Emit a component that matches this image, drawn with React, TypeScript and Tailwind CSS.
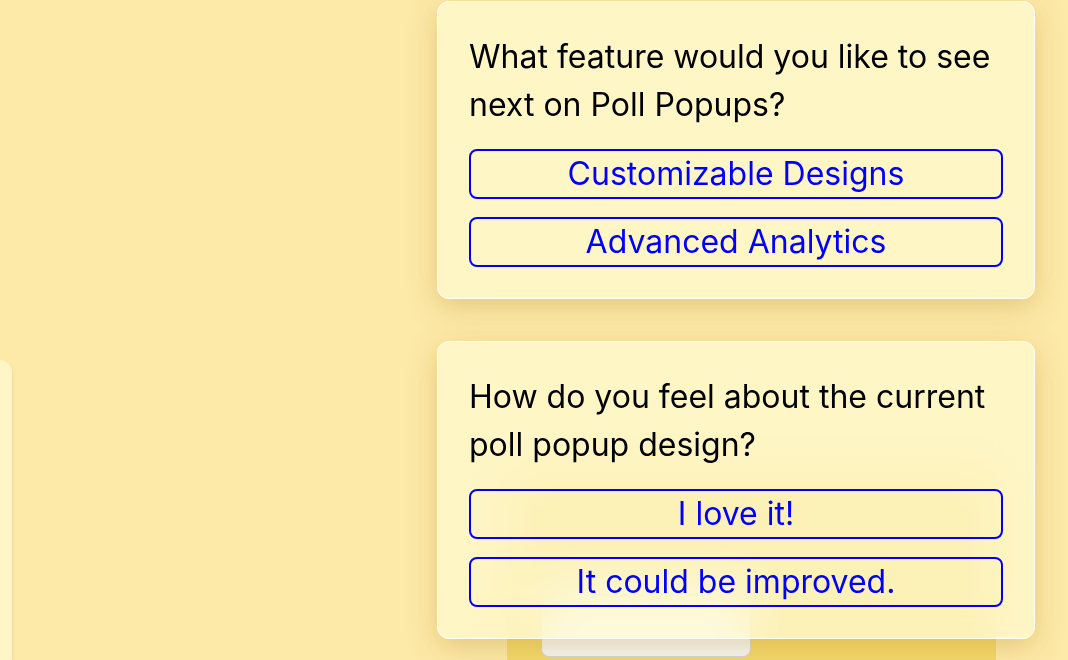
import React from 'react';

type Poll = {
  question: string;
  options: string[];
};

const polls: Poll[] = [
  {
    question: 'What feature would you like to see next on Poll Popups?',
    options: ['Customizable Designs', 'Advanced Analytics'],
  },
  {
    question: 'How do you feel about the current poll popup design?',
    options: ['I love it!', 'It could be improved.'],
  },
];

function PollCard({ poll }: { poll: Poll }) {
  return (
    <div className="relative z-10 w-[598px] rounded-xl border border-white bg-[#fff9d0]/75 px-[31px] pt-[31px] pb-[31px] shadow-[0_8px_28px_rgba(180,140,40,0.35)] backdrop-blur-xl">
      <p className="text-[32px] leading-[48px] text-black">{poll.question}</p>
      <div className="mt-5 flex flex-col gap-[18px]">
        {poll.options.map((opt) => (
          <button
            key={opt}
            className="h-[50px] w-full rounded-lg border-2 border-[#0000ff] bg-transparent text-[32px] leading-none text-[#0000ff]"
          >
            {opt}
          </button>
        ))}
      </div>
    </div>
  );
}

export default function App() {
  return (
    <div
      className="flex h-[660px] w-[1068px] overflow-hidden bg-[#fde9a8]"
      style={{ fontFamily: 'Inter, "Noto Sans", sans-serif' }}
    >
      {/* left card, mostly off screen */}
      <div className="w-[12px] shrink-0 pt-[360px]">
        <div className="h-full rounded-tr-xl bg-[#fef6c4] shadow-md" />
      </div>

      <div className="ml-[425px] flex flex-col gap-[42px] pt-px">
        <PollCard poll={polls[0]} />

        <div className="relative">
          {/* page content under the second popup */}
          <div className="absolute top-[130px] left-[70px] h-[400px] w-[489px] bg-[#f3d86c]">
            <div className="ml-[34px] mt-[110px] h-[76px] w-[210px] rounded-lg border border-[#d4d4d8] bg-[#f7f7f7]" />
          </div>
          <PollCard poll={polls[1]} />
        </div>
      </div>
    </div>
  );
}
